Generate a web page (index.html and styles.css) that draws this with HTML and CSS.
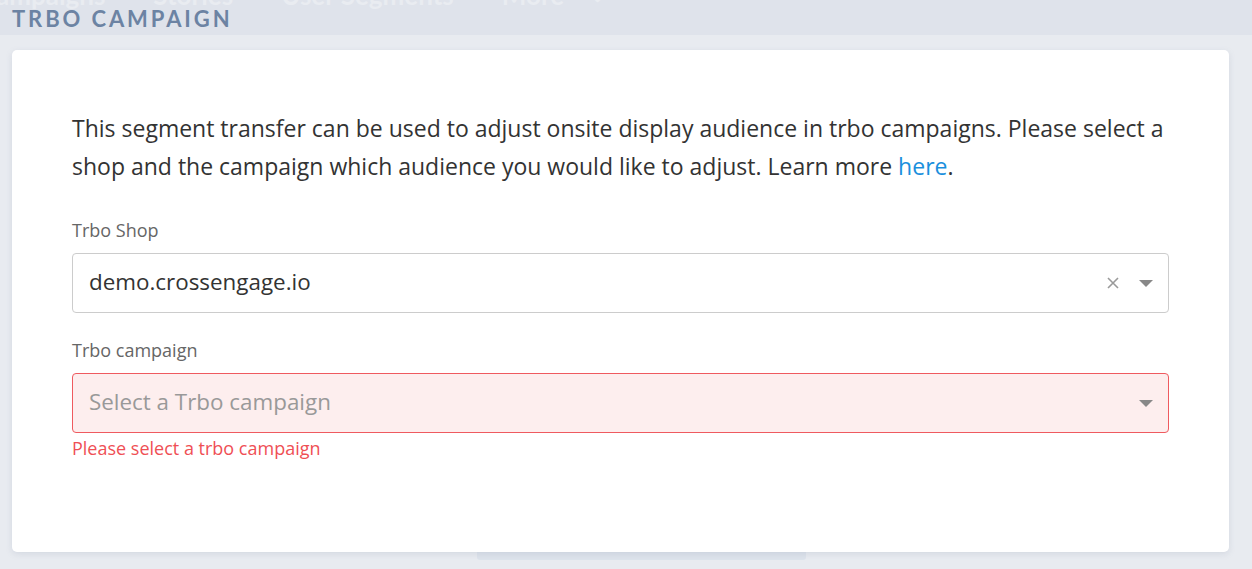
FILE: index.html
```html
<!DOCTYPE html>
<html>
<head>
<meta charset="utf-8">
<link rel="stylesheet" href="styles.css">
</head>
<body>
<header class="topbar">
  <nav class="nav">
    <span class="nav-item first">ampaigns</span>
    <span class="nav-item">Stories</span>
    <span class="nav-item">User Segments</span>
    <span class="nav-item">More</span>
    <span class="nav-item chev">⌄</span>
  </nav>
  <h1 class="title">TRBO CAMPAIGN</h1>
</header>
<main class="page">
  <section class="card">
    <p class="intro">This segment transfer can be used to adjust onsite display audience in trbo campaigns. Please select a shop and the campaign which audience you would like to adjust. Learn more <a class="link" href="#">here</a>.</p>
    <div class="field">
      <label class="label">Trbo Shop</label>
      <div class="select">
        <span class="value">demo.crossengage.io</span>
        <svg class="clear" width="12" height="12" viewBox="0 0 12 12"><path d="M1 1 L11 11 M11 1 L1 11" stroke="#9a9a9a" stroke-width="1.6" fill="none"/></svg>
        <span class="arrow"></span>
      </div>
    </div>
    <div class="field">
      <label class="label">Trbo campaign</label>
      <div class="select invalid">
        <span class="placeholder">Select a Trbo campaign</span>
        <span class="arrow"></span>
      </div>
      <div class="error">Please select a trbo campaign</div>
    </div>
  </section>
  <div class="under"></div>
</main>
</body>
</html>
```
FILE: styles.css
```css
html, body {
  margin: 0;
  padding: 0;
}
body {
  background: #e8ebf0;
  font-family: "Open Sans", "Liberation Sans", sans-serif;
  height: 569px;
  overflow: hidden;
}
.topbar {
  height: 35px;
  background: #dfe3eb;
  overflow: hidden;
  position: relative;
}
.nav {
  display: flex;
  margin-top: -20px;
  height: 30px;
  font-family: "Lato", "Open Sans", sans-serif;
  font-weight: 700;
  font-size: 26px;
  line-height: 30px;
  color: #e9ecf1;
}
.nav-item { margin-right: 48px; }
.nav-item.first { margin-left: -4px; }
.nav-item.chev { font-size: 18px; margin-left: -22px; }
.title {
  position: absolute;
  left: 12px;
  top: 6px;
  margin: 0;
  font-family: "Lato", "Open Sans", sans-serif;
  font-weight: 700;
  font-size: 22px;
  line-height: 26px;
  letter-spacing: 2.9px;
  color: #6c83a3;
}
.page {
  padding: 15px 23px 0 12px;
  position: relative;
}
.card {
  background: #fff;
  border-radius: 5px;
  box-shadow: 0 2px 6px rgba(120, 135, 160, 0.18);
  height: 502px;
  box-sizing: border-box;
  padding: 59px 60px 0 60px;
  position: relative;
  z-index: 1;
}
.intro {
  margin: 0 0 33px 0;
  font-size: 23px;
  line-height: 38px;
  color: #333;
}
.link {
  color: #1a8fdd;
  text-decoration: none;
}
.field {
  margin-bottom: 25px;
}
.label {
  display: block;
  font-size: 18px;
  line-height: 24px;
  color: #666;
  margin-bottom: 11px;
}
.select {
  height: 60px;
  box-sizing: border-box;
  border: 1px solid #cccccc;
  border-radius: 4px;
  display: flex;
  align-items: center;
  padding: 0 15px 0 16px;
  font-size: 22.4px;
}
.select .value {
  flex: 1;
  color: #333;
  margin-top: -3px;
}
.select .placeholder {
  flex: 1;
  color: #999;
  margin-top: -3px;
}
.clear {
  margin-right: 20px;
}
.arrow {
  width: 0;
  height: 0;
  border-left: 7px solid transparent;
  border-right: 7px solid transparent;
  border-top: 7px solid #888;
}
.select.invalid {
  background: #fdeeee;
  border-color: #ef5a5f;
}
.error {
  font-size: 18px;
  line-height: 24px;
  color: #ef4f55;
  margin-top: 3px;
}
.under {
  position: absolute;
  left: 477px;
  top: 505px;
  width: 329px;
  height: 20px;
  background: #dde3eb;
  border-radius: 3px;
}
```
